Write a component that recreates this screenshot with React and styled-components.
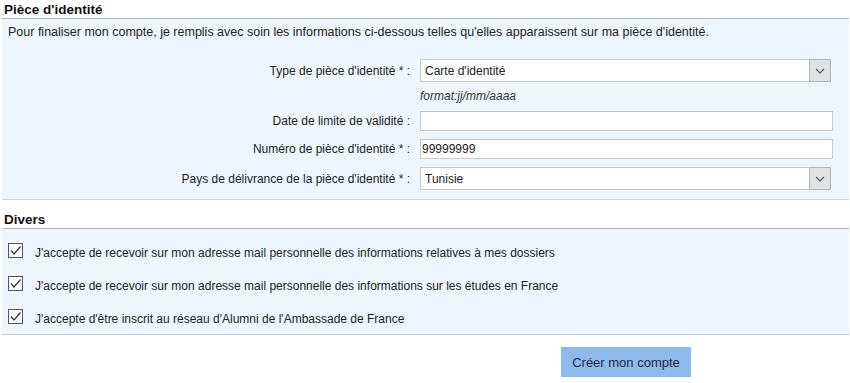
import React from "react";
import styled, { createGlobalStyle } from "styled-components";

const Global = createGlobalStyle`
  html, body { margin: 0; padding: 0; background: #ffffff; }
  body {
    font-family: "Liberation Sans", Arial, sans-serif;
    font-size: 12px;
    color: #222222;
  }
`;

const Page = styled.div`
  width: 850px;
  display: flex;
  flex-direction: column;
`;

const SectionTitle = styled.h2`
  margin: ${(p) => (p.$first ? "0" : "10px")} 0 0 0;
  padding: 2px 0 0 4px;
  height: 16px;
  font-size: 13.5px;
  line-height: 15px;
  font-weight: bold;
  color: #111111;
`;

const Panel = styled.div`
  margin: 0 1px 0 2px;
  background: #eef5fd;
  border-top: 1px solid #a9b6c2;
  border-bottom: 1px solid #c8d2dc;
  padding: ${(p) => p.$pad};
`;

const Intro = styled.p`
  margin: 0 0 0 6px;
  font-size: 12.5px;
  line-height: 14px;
  color: #222222;
`;

const FormGrid = styled.div`
  margin-top: 20px;
  display: grid;
  grid-template-columns: 408px 413px;
  column-gap: 10px;
  row-gap: 8px;
  align-items: center;
`;

const Label = styled.label`
  text-align: right;
  line-height: 14px;
  color: #222222;
`;

const Hint = styled.div`
  font-style: italic;
  color: #333333;
  line-height: 13px;
  height: 13px;
`;

const SelectWrap = styled.div`
  width: 411px;
  height: 23px;
  display: flex;
  box-sizing: border-box;
`;

const Select = styled.select`
  flex: 1;
  appearance: none;
  -webkit-appearance: none;
  height: 23px;
  box-sizing: border-box;
  border: 1px solid #c6c9cc;
  border-right: none;
  background: #ffffff;
  padding: 0 0 0 4px;
  margin: 0;
  font-family: "Liberation Sans", Arial, sans-serif;
  font-size: 12px;
  color: #222222;
  outline: none;
`;

const ArrowBox = styled.div`
  width: 22px;
  height: 23px;
  box-sizing: border-box;
  border: 1px solid #b4b7ba;
  background: #e0e1e3;
  display: flex;
  align-items: center;
  justify-content: center;
`;

const TextInput = styled.input`
  width: 413px;
  height: 20px;
  box-sizing: border-box;
  border: 1px solid #c9cbcd;
  border-top-color: #bfc1c3;
  background: #ffffff;
  padding: 0 0 0 1px;
  margin: 0;
  font-family: "Liberation Sans", Arial, sans-serif;
  font-size: 12px;
  color: #222222;
  outline: none;
`;

const CheckList = styled.div`
  display: flex;
  flex-direction: column;
  gap: 15px;
`;

const CheckRow = styled.label`
  display: flex;
  align-items: flex-start;
  height: 18px;
  padding-left: 6px;
`;

const Box = styled.span`
  width: 15px;
  height: 15px;
  box-sizing: border-box;
  border: 1px solid #555555;
  background: #ffffff;
  display: flex;
  align-items: center;
  justify-content: center;
  flex-shrink: 0;
`;

const CheckText = styled.span`
  margin: 3px 0 0 12px;
  line-height: 14px;
  color: #222222;
`;

const Actions = styled.div`
  display: flex;
  padding: 12px 0 0 561px;
`;

const SubmitButton = styled.button`
  width: 130px;
  height: 30px;
  border: none;
  background: #8db9eb;
  color: #1c2a44;
  font-family: "Liberation Sans", Arial, sans-serif;
  font-size: 13px;
  padding: 0;
  margin: 0;
  cursor: pointer;
`;

const Chevron = () => (
  <svg width="10" height="6" viewBox="0 0 10 6">
    <path d="M1 1 L5 5 L9 1" fill="none" stroke="#555" strokeWidth="1.1" />
  </svg>
);

const Tick = () => (
  <svg width="13" height="13" viewBox="0 0 13 13">
    <path d="M2 6.5 L5 10 L11.5 2.5" fill="none" stroke="#333" strokeWidth="1.2" />
  </svg>
);

const SelectField = ({ value }) => (
  <SelectWrap>
    <Select defaultValue={value}>
      <option>{value}</option>
    </Select>
    <ArrowBox>
      <Chevron />
    </ArrowBox>
  </SelectWrap>
);

const checks = [
  "J'accepte de recevoir sur mon adresse mail personnelle des informations relatives à mes dossiers",
  "J'accepte de recevoir sur mon adresse mail personnelle des informations sur les études en France",
  "J'accepte d'être inscrit au réseau d'Alumni de l'Ambassade de France",
];

export default function App() {
  return (
    <Page>
      <Global />
      <SectionTitle $first>Pièce d'identité</SectionTitle>
      <Panel $pad="6px 0 9px 0">
        <Intro>
          Pour finaliser mon compte, je remplis avec soin les informations ci-dessous telles qu'elles apparaissent sur ma pièce d'identité.
        </Intro>
        <FormGrid>
          <Label>Type de pièce d'identité * :</Label>
          <SelectField value="Carte d'identité" />
          <span />
          <Hint>format:jj/mm/aaaa</Hint>
          <Label>Date de limite de validité :</Label>
          <TextInput defaultValue="" />
          <Label>Numéro de pièce d'identité * :</Label>
          <TextInput defaultValue="99999999" />
          <Label>Pays de délivrance de la pièce d'identité * :</Label>
          <SelectField value="Tunisie" />
        </FormGrid>
      </Panel>
      <SectionTitle>Divers</SectionTitle>
      <Panel $pad="14px 0 7px 0">
        <CheckList>
          {checks.map((c) => (
            <CheckRow key={c}>
              <Box>
                <Tick />
              </Box>
              <CheckText>{c}</CheckText>
            </CheckRow>
          ))}
        </CheckList>
      </Panel>
      <Actions>
        <SubmitButton>Créer mon compte</SubmitButton>
      </Actions>
    </Page>
  );
}
